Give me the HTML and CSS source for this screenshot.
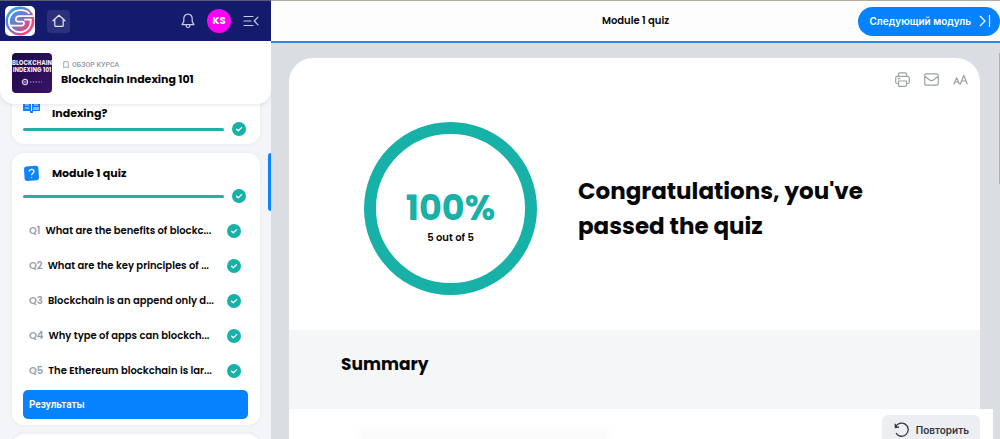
FILE: index.html
```html
<!DOCTYPE html>
<html lang="ru">
<head>
<meta charset="utf-8">
<meta name="viewport" content="width=device-width, initial-scale=1">
<title>Module 1 quiz</title>
<link rel="stylesheet" href="styles.css">
</head>
<body>
<svg class="defs" aria-hidden="true">
  <symbol id="check" viewBox="0 0 14 14"><circle cx="7" cy="7" r="7" fill="#17b1a8"/><path d="M4.5 7.2 6.3 8.8 9.6 5.6" fill="none" stroke="#fff" stroke-width="1.3" stroke-linecap="round" stroke-linejoin="round"/></symbol>
</svg>
<div class="shell">
  <aside class="sidebar">
    <header class="topbar">
      <a class="logo" href="#" aria-label="Logo">
        <svg viewBox="0 0 30 30" width="30" height="30">
          <defs><linearGradient id="lg" x1="0" y1="0" x2="1" y2="1"><stop offset="0.2" stop-color="#3f9be0"/><stop offset="0.5" stop-color="#7a72c8"/><stop offset="0.75" stop-color="#e94b7c"/></linearGradient></defs>
          <rect width="30" height="30" rx="5" fill="#fff"/>
          <circle cx="15" cy="15" r="14.4" fill="url(#lg)"/>
          <path d="M24.5 7.6C20 2.6 10.5 3 6.3 8.4 2.4 13.4 3.4 20.4 7.8 23.8 13 27.8 20.6 26.6 24 21.6 25.6 19.2 26 17 25.8 13.6H19.2" fill="none" stroke="#fff" stroke-width="1.8"/>
          <path d="M29 10.2H14.5C10.2 10.2 9.4 15.6 13.4 15.6H17.6C19.8 15.6 19.4 19.6 16.6 19.6H5" fill="none" stroke="#fff" stroke-width="1.8"/>
        </svg>
      </a>
      <button class="home" type="button" aria-label="Home">
        <svg viewBox="0 0 14 14" width="14" height="14"><path d="M1 6.8 7 1.2 13 6.8M2.8 5.6V11.4Q2.8 12.4 3.8 12.4H10.2Q11.2 12.4 11.2 11.4V5.6" class="line"/></svg>
      </button>
      <button class="plain bell" type="button" aria-label="Notifications">
        <svg viewBox="0 0 14 16" width="14" height="16"><path d="M7 1.2C4.3 1.2 2.8 3.2 2.8 5.6V8.6L1 11.6H13L11.2 8.6V5.6C11.2 3.2 9.7 1.2 7 1.2ZM5.2 12V13Q5.3 14.6 7 14.6T8.8 13V12" class="line"/></svg>
      </button>
      <button class="avatar" type="button">KS</button>
      <button class="plain" type="button" aria-label="Collapse menu">
        <svg viewBox="0 0 16 12" width="16" height="12"><path d="M1 1.5H10M1 6H8M1 10.5H10M15 2.2 11.2 6 15 9.8" class="line"/></svg>
      </button>
    </header>
    <section class="course">
      <div class="cover"><span>BLOCKCHAIN</span><span>INDEXING 101</span>
        <svg viewBox="0 0 22 8" width="22" height="8"><circle cx="4" cy="4" r="2.6" fill="none" stroke="#d9cdf0" stroke-width="1.2"/><path d="M2.5 4H5.5" stroke="#d9cdf0"/><path d="M9 4H21" stroke="#8d78b8" stroke-width="1.4" stroke-dasharray="1.4 1.4"/></svg>
      </div>
      <div class="course-text">
        <a class="overview" href="#"><svg viewBox="0 0 6 8" width="6" height="8"><path d="M.7.7H5.3V7L3 5.8.7 7Z" fill="none" stroke="#9297a3" stroke-width=".8"/></svg>ОБЗОР КУРСА</a>
        <h1>Blockchain Indexing 101</h1>
      </div>
    </section>
    <nav class="modules">
      <article class="module scrolled">
        <div class="module-head">
          <svg viewBox="0 0 17 17" width="17" height="17"><path d="M0 1H8V15H0ZM9 1H17V15H9Z" fill="#0a84ff"/><path d="M7 15H10V17H7Z" fill="#0a84ff"/><path d="M2 9H6M2 12H6M11 9H15" stroke="#d5eaff"/><path d="M10 11H16V14H10Z" fill="#79bcff"/></svg>
          <h2>Indexing?</h2>
        </div>
        <div class="progress"><span class="bar"></span><svg class="check"><use href="#check"/></svg></div>
      </article>
      <article class="module active">
        <div class="module-head">
          <svg viewBox="0 0 17 17" width="17" height="17"><path d="M3 1.5 13 .8Q15 .8 15.3 2.8L16 12.8Q16 15 14 15.3L4 16Q1.8 16 1.6 14L1 4Q1 1.8 3 1.5Z" fill="#0a84ff"/><path d="M6.2 6.6C6.2 3.7 11 3.8 11 6.5 11 8.4 8.6 8.2 8.6 10.2M8.6 12V12.8" fill="none" stroke="#fff" stroke-width="1.3"/></svg>
          <h2>Module 1 quiz</h2>
        </div>
        <div class="progress"><span class="bar"></span><svg class="check"><use href="#check"/></svg></div>
        <ul class="questions">
          <li><a href="#"><b>Q1</b><span>What are the benefits of blockc...</span><svg class="check"><use href="#check"/></svg></a></li>
          <li><a href="#"><b>Q2</b><span>What are the key principles of ...</span><svg class="check"><use href="#check"/></svg></a></li>
          <li><a href="#"><b>Q3</b><span>Blockchain is an append only d...</span><svg class="check"><use href="#check"/></svg></a></li>
          <li><a href="#"><b>Q4</b><span>Why type of apps can blockch...</span><svg class="check"><use href="#check"/></svg></a></li>
          <li><a href="#"><b>Q5</b><span>The Ethereum blockchain is lar...</span><svg class="check"><use href="#check"/></svg></a></li>
        </ul>
        <button class="results" type="button">Результаты</button>
      </article>
      <article class="module"></article>
    </nav>
  </aside>
  <main class="main">
    <header class="mainbar">
      <h2>Module 1 quiz</h2>
      <button class="next" type="button">Следующий модуль
        <svg viewBox="0 0 12 14" width="12" height="14"><path d="M1 2 6 7 1 12M10.5 1V13" fill="none" stroke="#fff" stroke-width="1.2"/></svg>
      </button>
    </header>
    <div class="stage">
      <section class="panel">
        <div class="tools">
          <button class="plain" type="button" aria-label="Print"><svg viewBox="0 0 15 15" width="15" height="15"><path d="M3.5 4.4V2Q3.5.8 4.7.8H10.3Q11.5.8 11.5 2V4.4M3.5 11.5H2.2Q.7 11.5.7 10V6Q.7 4.4 2.2 4.4H12.8Q14.3 4.4 14.3 6V10Q14.3 11.5 12.8 11.5H11.5M3.5 9H11.5V13Q11.5 14.3 10.3 14.3H4.7Q3.5 14.3 3.5 13ZM3.2 6.7H4.8" class="line"/></svg></button>
          <button class="plain" type="button" aria-label="Email"><svg viewBox="0 0 15 13" width="15" height="13"><path d="M2.4.8H12.6Q14.2.8 14.2 2.4V10.6Q14.2 12.2 12.6 12.2H2.4Q.8 12.2.8 10.6V2.4Q.8.8 2.4.8ZM1 3.6 5.6 7Q7.5 8.4 9.4 7L14 3.6" class="line"/></svg></button>
          <button class="plain" type="button" aria-label="Text size"><svg viewBox="0 0 15 11" width="15" height="11"><path d="M1 10 3.7 3.8 6.4 10M1.9 8H5.5M7.4 10 10.8 1.2 14.2 10M8.6 7H13" class="line"/></svg></button>
        </div>
        <div class="result">
          <div class="ring"><strong>100%</strong><span>5 out of 5</span></div>
          <h2>Congratulations, you've<br>passed the quiz</h2>
        </div>
        <div class="summary"><h3>Summary</h3></div>
      </section>
      <footer class="footer">
        <div class="haze"></div>
        <button class="retry" type="button"><svg viewBox="0 0 16 16" width="16" height="16"><path d="M1.4 5.4A6.6 6.6 0 1 1 2 11.2M1.2 1.8 1.4 5.6 5 5" fill="none" stroke="#33373e" stroke-width="1.3"/></svg>Повторить</button>
      </footer>
    </div>
    <div class="scrollbar"></div>
  </main>
</div>
</body>
</html>
```
FILE: styles.css
```css
* { box-sizing: border-box; }
body { margin: 0; font-family: Poppins, Inter, "Liberation Sans", sans-serif; color: #060607; background: #dadde2; }
h1, h2, h3, ul { margin: 0; padding: 0; }
button { border: 0; font: inherit; cursor: pointer; }
a { color: inherit; text-decoration: none; }
svg { display: block; flex: none; }
.defs { position: absolute; width: 0; height: 0; }
.line { fill: none; stroke: currentColor; stroke-width: 1.2; stroke-linecap: round; stroke-linejoin: round; }
.plain { padding: 0; background: none; color: inherit; display: flex; }
.shell { display: grid; grid-template-columns: 271px 1fr; height: 100vh; overflow: hidden; }

.sidebar { background: #f4f5f8; min-height: 0; overflow: hidden; }
.topbar { display: flex; align-items: center; gap: 12px; height: 41px; padding: 0 12px 0 5px; background: #141b6c; border-top: 1px solid #5b5c78; color: #c9cce6; }
.home { width: 23px; height: 23px; padding: 0; display: grid; place-items: center; border-radius: 4px; background: #2b327b; color: #e4e6f5; }
.bell { margin-left: auto; }
.avatar { width: 24px; height: 24px; padding: 0; border-radius: 50%; background: #ff00f5; color: #fff; font-size: 10px; font-weight: 700; }
.course { position: relative; z-index: 1; display: flex; align-items: center; gap: 9px; height: 63px; padding: 0 12px; background: #fff; border-radius: 0 0 14px 14px; box-shadow: 0 1px 4px rgba(30, 40, 70, .12); }
.cover { display: flex; flex-direction: column; align-items: center; justify-content: center; width: 40px; height: 40px; flex: none; overflow: hidden; border-radius: 4px; background: linear-gradient(135deg, #1d0a45, #3a1268); color: #eee8f8; font-size: 6px; line-height: 7px; font-weight: 700; white-space: nowrap; }
.cover svg { margin-top: 4px; }
.overview { display: flex; align-items: center; gap: 3px; padding-left: 2px; color: #9297a3; font: 500 7px/12px Roboto, sans-serif; }
h1 { font-size: 11px; line-height: 16px; font-weight: 700; white-space: nowrap; }

.modules { display: flex; flex-direction: column; gap: 9px; padding: 0 11px 0 12px; margin-top: -14px; }
.module { position: relative; min-height: 50px; padding: 10px 12px 6px 11px; background: #fff; border-radius: 12px; box-shadow: 0 0 4px rgba(30, 40, 70, .06); flex: none; }
.scrolled { height: 54px; padding-top: 6px; }
.active::after { content: ""; position: absolute; top: 0; right: -11px; width: 3px; height: 58px; background: #0a84ff; border-radius: 3px 0 0 3px; }
.module-head { display: flex; align-items: center; gap: 12px; height: 20px; }
.module-head h2 { font-size: 11px; line-height: 20px; font-weight: 700; }
.scrolled .module-head { align-items: flex-start; }
.scrolled h2 { padding-top: 7px; }
.progress { display: flex; align-items: center; gap: 8px; height: 14px; margin-top: 6px; padding-right: 2px; }
.bar { flex: 1; height: 3px; border-radius: 2px; background: #26ada5; }
.check { width: 14px; height: 14px; }
.questions { list-style: none; margin: 10px 0 2px; }
.questions a { display: flex; align-items: center; gap: 5px; height: 35px; padding: 0 7px 0 6px; font-size: 10px; font-weight: 600; white-space: nowrap; }
.questions b { color: #9a9fac; font-weight: 600; }
.questions .check { margin-left: auto; }
.results { display: block; width: 100%; height: 29px; padding: 0 6px; text-align: left; color: #fff; background: #0582ff; border-radius: 5px; font: 600 10px Roboto, sans-serif; }

.main { position: relative; min-width: 0; min-height: 0; overflow: hidden; background: #dadde2; }
.mainbar { display: grid; grid-template-columns: 1fr auto 1fr; align-items: center; height: 43px; background: #fdfdfd; border-top: 1px solid #b4aaa0; border-bottom: 2px solid #2b8ae8; }
.mainbar h2 { grid-column: 2; font-size: 10px; font-weight: 600; }
.next { justify-self: end; display: flex; align-items: center; gap: 8px; height: 29px; padding: 0 9px 0 11px; border-radius: 15px; background: #0582ff; color: #fff; font: 600 10px Inter, sans-serif; white-space: nowrap; }
.stage { padding: 15px 7px 0 18px; }
.panel { margin-right: 13px; background: #fff; border-radius: 24px 24px 0 0; overflow: hidden; }
.tools { display: flex; justify-content: flex-end; align-items: center; gap: 14px; height: 42px; padding-right: 12px; color: #9a9fa8; }
.result { display: flex; align-items: center; gap: 41px; padding: 22px 20px 35px 75px; }
.ring { display: flex; flex-direction: column; align-items: center; justify-content: center; width: 173px; height: 173px; flex: none; padding-top: 14px; border: 12px solid #17b1a8; border-radius: 50%; }
.ring strong { font-size: 35px; line-height: 44px; font-weight: 700; color: #17b1a8; }
.ring span { font-size: 10px; line-height: 16px; font-weight: 600; }
.result h2 { font-size: 23px; line-height: 35px; font-weight: 700; }
.summary { height: 79px; padding: 22px 52px; background: #f5f6f8; }
.summary h3 { font-size: 17px; line-height: 24px; font-weight: 700; }
.footer { display: flex; justify-content: space-between; align-items: flex-start; padding: 6px 13px 12px 70px; background: #fff; }
.haze { width: 250px; height: 10px; margin-top: 16px; background: #f8f8f9; filter: blur(4px); }
.retry { display: flex; align-items: center; gap: 6px; height: 29px; padding: 0 11px 0 12px; border-radius: 6px; background: #eceef1; color: #33373e; font: 600 10px Inter, sans-serif; }
.scrollbar { position: absolute; top: 53px; right: 0; width: 1px; height: 131px; background: #aeb0b4; }
```
